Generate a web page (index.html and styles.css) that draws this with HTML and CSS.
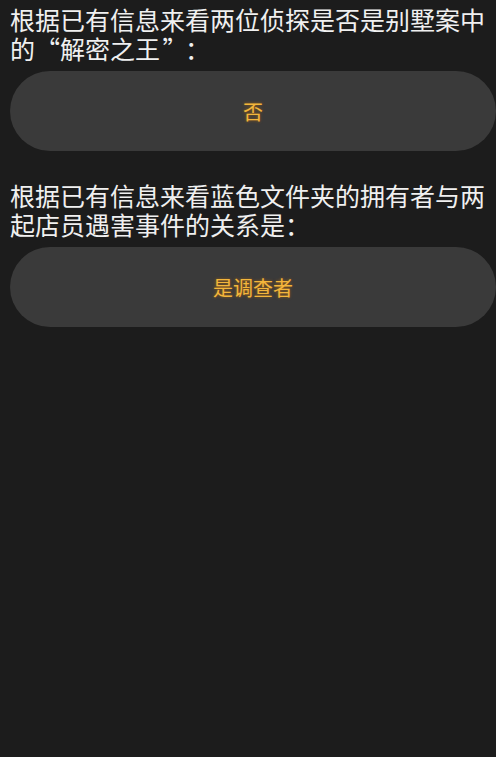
FILE: index.html
```html
<!DOCTYPE html>
<html lang="zh-CN">
<head>
<meta charset="utf-8">
<title>问答</title>
<link rel="stylesheet" href="styles.css">
</head>
<body>

<div class="quiz">

<div class="item">
<div class="question">根据已有信息来看两位侦探是否是别墅案中的<span class="quote open">“</span>解密之王<span class="quote close">”</span>：</div>
<div class="answer"><span class="answer-text">否</span></div>
</div>

<div class="item">
<div class="question">根据已有信息来看蓝色文件夹的拥有者与两起店员遇害事件的关系是：</div>
<div class="answer"><span class="answer-text">是调查者</span></div>
</div>

</div>

</body>
</html>
```

FILE: styles.css
```css
html, body {
  margin: 0;
  background-color: #1c1c1c;
}

body {
  font-family: "Noto Sans CJK SC", "Noto Sans", sans-serif;
  overflow: hidden;
  height: 757px;
}

.quiz {
  padding: 5px 0 0 10px;
  display: flex;
  flex-direction: column;
  gap: 30px;
}

.item {
  display: flex;
  flex-direction: column;
  gap: 8px;
}

.question {
  width: 486px;
  font-size: 25px;
  line-height: 29px;
  color: #f0f0f0;
}

/* quote marks take a full cell, like the original */
.quote {
  display: inline-block;
  width: 1em;
}

.quote.open {
  text-align: right;
  padding-right: 0.2em;
  width: 0.8em;
}

.quote.close {
  text-align: left;
  padding-left: 0.1em;
  width: 0.9em;
}

.answer {
  width: 486px;
  height: 80px;
  border-radius: 40px;
  background-color: #3a3a3a;
  display: flex;
  align-items: center;
  justify-content: center;
}

.answer-text {
  font-size: 20px;
  color: #f3b63c;
  text-shadow: 0 0 3px rgba(210, 120, 0, 0.7);
}
```
